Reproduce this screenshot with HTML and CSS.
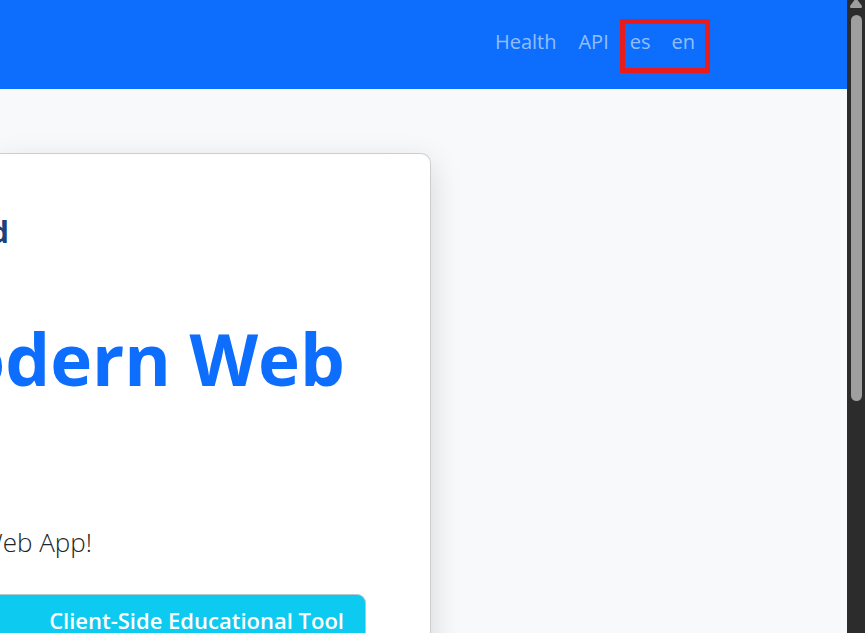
FILE: index.html
```html
<!DOCTYPE html>
<html lang="en">
<head>
<meta charset="utf-8">
<title>Modern Web</title>
<link rel="stylesheet" href="styles.css">
</head>
<body>
<div class="window">
  <div class="page">
    <header class="navbar">
      <nav class="nav">
        <a href="#health">Health</a>
        <a href="#api">API</a>
        <div class="languages">
          <a href="#es">es</a>
          <a href="#en">en</a>
        </div>
      </nav>
    </header>
    <main class="main">
      <section class="card">
        <p class="eyebrow">d</p>
        <h1 class="title">Modern Web</h1>
        <p class="lead">Web App!</p>
        <div class="panel">
          <h2 class="panel-title">Client-Side Educational Tool</h2>
        </div>
      </section>
    </main>
  </div>
  <div class="scrollbar">
    <svg class="arrow" width="14" height="8" viewBox="0 0 14 8" aria-hidden="true"><path d="M5.5 0h3l4.3 5.8Q13.500 8 12 8H2Q.5 8 1.200 5.800Z" fill="#9f9f9f"/></svg>
    <div class="thumb"></div>
  </div>
</div>
</body>
</html>
```
FILE: styles.css
```css
* {
  box-sizing: border-box;
}

body {
  margin: 0;
  font-family: "Open Sans", "Noto Sans", sans-serif;
  color: #212529;
  background: #f8f9fa;
}

.window {
  display: grid;
  grid-template-columns: minmax(0, 1fr) 18px;
  height: 100vh;
  overflow: hidden;
}

.page {
  overflow: hidden;
  background: #f8f9fb;
}

.navbar {
  display: flex;
  justify-content: flex-end;
  padding: 19px 137px 16px 0;
  background: #0d6efd;
}

.nav {
  display: flex;
}

.nav a {
  font-size: 20px;
  line-height: 30px;
  color: #92befe;
  text-decoration: none;
}

.nav > a {
  padding: 8px 11px;
}

.languages {
  display: flex;
  gap: 21px;
  height: 54px;
  padding: 3px 10px 0 5px;
  border: 5px solid #e81c1c;
}

.main {
  padding: 64px 416px 0 0;
}

.card {
  display: flex;
  flex-direction: column;
  align-items: flex-end;
  padding: 56px 64px 64px 0;
  white-space: nowrap;
  background: #fff;
  border: 1px solid #ccced0;
  border-left: 0;
  border-radius: 0 10px 10px 0;
  box-shadow: 0 11px 32px rgba(0, 0, 0, 0.15);
}

.eyebrow {
  margin: 0 357px 0 0;
  font-size: 30px;
  line-height: 44px;
  font-weight: 700;
  color: #213f78;
}

.title {
  margin: 55px 21px 0 0;
  font-size: 71px;
  line-height: 100px;
  font-weight: 700;
  color: #0d6efd;
}

.lead {
  margin: 112px 274px 0 0;
  font-size: 26px;
  line-height: 42px;
  font-weight: 300;
}

.panel {
  align-self: stretch;
  border: 1px solid #b6c6cc;
  border-left: 0;
  border-radius: 0 9px 9px 0;
  margin-top: 31px;
  background: #0dcaf0;
}

.panel-title {
  margin: 0;
  padding: 9px 21px;
  font-size: 22px;
  line-height: 32px;
  font-weight: 600;
  text-align: right;
  color: #fff;
}

.scrollbar {
  display: flex;
  flex-direction: column;
  align-items: center;
  gap: 7px;
  background: #2c2c2c;
}

.arrow {
  display: block;
}

.thumb {
  width: 11px;
  height: 61vh;
  border-radius: 6px;
  background: #9f9f9f;
}
```
